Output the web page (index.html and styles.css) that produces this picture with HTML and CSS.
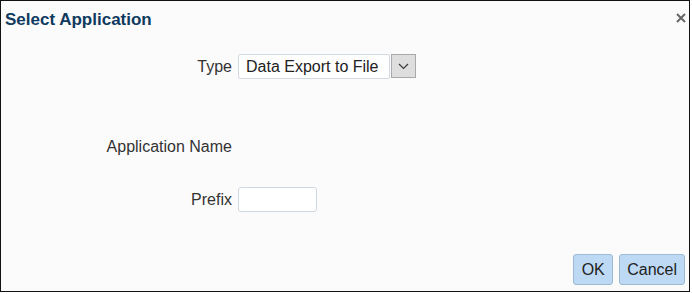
FILE: index.html
```html
<!DOCTYPE html>
<html lang="en">
<head>
  <meta charset="UTF-8">
  <title>Select Application</title>
  <link rel="stylesheet" href="styles.css">
</head>
<body>

<div class="dialog">
  <div class="dialog-header">
    <span class="dialog-title">Select Application</span>
    <span class="close-btn">
      <svg width="10" height="10" viewBox="0 0 10 10">
        <path d="M1 1 L9 9 M9 1 L1 9" stroke="#666" stroke-width="2" fill="none"/>
      </svg>
    </span>
  </div>

  <div class="form">
    <div class="row">
      <label class="row-label">Type</label>
      <div class="select-box">
        <span class="select-value">Data Export to File</span>
        <span class="select-arrow">
          <svg width="11" height="7" viewBox="0 0 11 7">
            <path d="M1 1 L5.5 5.5 L10 1" stroke="#3a3a3a" stroke-width="1.2" fill="none"/>
          </svg>
        </span>
      </div>
    </div>
    <div class="row row-name">
      <label class="row-label">Application Name</label>
    </div>
    <div class="row row-prefix">
      <label class="row-label">Prefix</label>
      <input type="text" class="text-input">
    </div>
  </div>

  <div class="dialog-footer">
    <button class="btn btn-ok">OK</button>
    <button class="btn">Cancel</button>
  </div>
</div>

</body>
</html>
```

FILE: styles.css
```css
body {
  margin: 0;
  font-family: "Liberation Sans", Arial, sans-serif;
  background: #ffffff;
}
.dialog {
  width: 690px;
  height: 292px;
  box-sizing: border-box;
  border: 1px solid #111;
  background: #fbfbfc;
  display: flex;
  flex-direction: column;
}
.dialog-header {
  display: flex;
  justify-content: space-between;
  align-items: flex-start;
  padding: 9px 3px 0 4px;
  height: 20px;
}
.dialog-title {
  font-size: 17px;
  font-weight: bold;
  line-height: 20px;
  color: #0f3a5e;
}
.close-btn {
  display: flex;
  padding-top: 3px;
}
.form {
  padding-top: 24px;
}
.row {
  display: flex;
  align-items: center;
  height: 25px;
  font-size: 16px;
  color: #333;
}
.row-name {
  margin-top: 55px;
}
.row-prefix {
  margin-top: 28px;
}
.row-label {
  width: 231px;
  text-align: right;
  margin-right: 6px;
}
.select-box {
  display: flex;
  height: 25px;
}
.select-value {
  width: 152px;
  box-sizing: border-box;
  border: 1px solid #d3d9e0;
  border-radius: 2px;
  background: #fff;
  padding-left: 7px;
  line-height: 23px;
  color: #222;
}
.select-arrow {
  width: 25px;
  height: 24px;
  box-sizing: border-box;
  margin-left: 1px;
  border: 1px solid #a9a9a9;
  background: #dedede;
  display: flex;
  align-items: center;
  justify-content: center;
}
.text-input {
  width: 79px;
  height: 25px;
  box-sizing: border-box;
  border: 1px solid #d0d8e2;
  border-radius: 3px;
  background: #fff;
  margin: 0;
  padding: 0 4px;
}
.dialog-footer {
  margin-top: auto;
  display: flex;
  justify-content: flex-end;
  gap: 6px;
  padding: 0 4px 6px 0;
}
.btn {
  height: 31px;
  padding: 0 7px;
  border: 1px solid #9dbad6;
  border-radius: 3px;
  background: #bdd9f4;
  color: #222;
  font-family: "Liberation Sans", Arial, sans-serif;
  font-size: 16px;
  cursor: pointer;
}
.btn-ok {
  width: 40px;
  padding: 0;
}
```
